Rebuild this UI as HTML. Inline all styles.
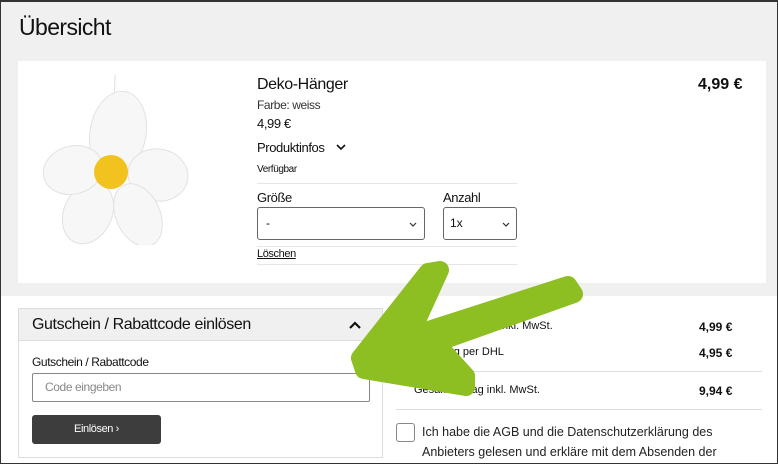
<!DOCTYPE html>
<html><head><meta charset="utf-8"><style>
*{margin:0;padding:0;box-sizing:border-box}
html,body{width:778px;height:464px;overflow:hidden}
body{position:relative;background:#fff;font-family:"Liberation Sans",sans-serif;color:#111}
.frame{position:absolute;left:0;top:0;width:778px;height:464px;border:1px solid #333;border-top-width:2px;pointer-events:none;z-index:5}
.top{position:absolute;left:0;top:0;width:778px;height:296px;background:#f0f0f0}
.a{position:absolute;white-space:nowrap}
.card{position:absolute;left:18px;top:61px;width:748px;height:222px;background:#fff}
.sel{position:absolute;border:1px solid #666;border-radius:3px;background:#fff;height:33px}
.hr{position:absolute;height:1px;background:#e6e6e6}
.n{letter-spacing:-0.4px}
</style></head><body>
<div class="top"></div>
<div class="a n" style="left:19px;top:14px;font-size:23px;letter-spacing:-0.6px">Übersicht</div>
<div class="card"></div>
<svg class="a" style="left:40px;top:75px" width="150" height="170" viewBox="0 0 150 170">
<line x1="75" y1="0" x2="74" y2="40" stroke="#ddd"/>
<g fill="#f7f7f7" stroke="#e2e2e2" stroke-width="1">
<ellipse cx="78" cy="58" rx="28" ry="42" transform="rotate(10 78 58)"/>
<ellipse cx="118" cy="100" rx="30" ry="26" transform="rotate(10 118 100)"/>
<ellipse cx="98" cy="140" rx="22" ry="33" transform="rotate(-25 98 140)"/>
<ellipse cx="48" cy="138" rx="24" ry="32" transform="rotate(25 48 138)"/>
<ellipse cx="33" cy="95" rx="30" ry="24" transform="rotate(-15 33 95)"/>
</g>
<circle cx="71" cy="97" r="17" fill="#f2c21f"/>
</svg>
<div class="a n" style="left:257px;top:76px;font-size:16px">Deko-Hänger</div>
<div class="a n" style="left:257px;top:98px;font-size:12px;color:#333">Farbe: weiss</div>
<div class="a n" style="left:257px;top:116px;font-size:13px">4,99 €</div>
<div class="a n" style="left:257px;top:140px;font-size:13px">Produktinfos</div>
<svg class="a" style="left:336px;top:143px" width="10" height="8"><path d="M1 2 L5 6 L9 2" fill="none" stroke="#111" stroke-width="1.6"/></svg>
<div class="a n" style="left:257px;top:164px;font-size:10px">Verfügbar</div>
<div class="hr" style="left:257px;top:183px;width:260px"></div>
<div class="a n" style="left:257px;top:190px;font-size:13px">Größe</div>
<div class="a n" style="left:443px;top:190px;font-size:13px">Anzahl</div>
<div class="sel" style="left:257px;top:207px;width:168px"><span class="a" style="left:8px;top:8px;font-size:12px">-</span><svg class="a" style="left:151px;top:14px" width="8" height="6"><path d="M1 1 L4 4 L7 1" fill="none" stroke="#333" stroke-width="1.2"/></svg></div>
<div class="sel" style="left:443px;top:207px;width:74px"><span class="a" style="left:6px;top:8px;font-size:12px">1x</span><svg class="a" style="left:58px;top:14px" width="8" height="6"><path d="M1 1 L4 4 L7 1" fill="none" stroke="#333" stroke-width="1.2"/></svg></div>
<div class="hr" style="left:257px;top:246px;width:260px"></div>
<div class="a n" style="left:257px;top:248px;font-size:11px;text-decoration:underline">Löschen</div>
<div class="hr" style="left:257px;top:264px;width:260px"></div>
<div class="a" style="left:698px;top:76px;font-size:16px;font-weight:bold">4,99 €</div>

<div class="a" style="left:18px;top:308px;width:365px;height:150px;border:1px solid #ddd"></div>
<div class="a" style="left:19px;top:309px;width:363px;height:32px;background:#f0f0f0;border-bottom:1px solid #ddd"></div>
<div class="a n" style="left:32px;top:316px;font-size:16px">Gutschein / Rabattcode einlösen</div>
<svg class="a" style="left:348px;top:320px" width="14" height="10"><path d="M2 8 L7 3 L12 8" fill="none" stroke="#111" stroke-width="2.2"/></svg>
<div class="a n" style="left:32px;top:355px;font-size:12px">Gutschein / Rabattcode</div>
<div class="a" style="left:32px;top:373px;width:338px;height:29px;border:1px solid #888;border-radius:2px"><span class="a n" style="left:12px;top:6px;font-size:12px;color:#888">Code eingeben</span></div>
<div class="a n" style="left:32px;top:415px;width:129px;height:29px;background:#3d3d3d;border-radius:3px;color:#fff;font-size:11px;text-align:center;line-height:29px">Einlösen ›</div>

<div class="a" style="left:414px;top:320px;font-size:11px">Zwischensumme inkl. MwSt.</div>
<div class="a" style="left:414px;top:346px;font-size:11px">Lieferung per DHL</div>
<div class="a" style="left:414px;top:384px;font-size:11px">Gesamtbetrag inkl. MwSt.</div>
<div class="a" style="left:699px;top:320px;font-size:12px;font-weight:bold">4,99 €</div>
<div class="a" style="left:699px;top:346px;font-size:12px;font-weight:bold">4,95 €</div>
<div class="a" style="left:699px;top:384px;font-size:12px;font-weight:bold">9,94 €</div>
<div class="hr" style="left:396px;top:371px;width:366px;background:#ddd"></div>
<div class="hr" style="left:396px;top:409px;width:366px;background:#ddd"></div>
<div class="a" style="left:396px;top:423px;width:19px;height:19px;border:1px solid #888;border-radius:3px"></div>
<div class="a" style="left:422px;top:422px;height:42px;overflow:hidden;font-size:12.5px;line-height:20px;color:#222">Ich habe die AGB und die Datenschutzerklärung des<br>Anbieters gelesen und erkläre mit dem Absenden der<br>Bestellung mein Einverständnis. Die Informationen</div>

<svg class="a" style="left:0;top:0;z-index:4" width="778" height="464">
<path d="M428 272 L440 270 L410 336 L568 285 L574 294 L436 343 L466 376 L466 387 L364 370 L360 358 Z" fill="#8dbe22" stroke="#8dbe22" stroke-width="18" stroke-linejoin="round"/>
</svg>
<div class="frame"></div>
</body></html>
